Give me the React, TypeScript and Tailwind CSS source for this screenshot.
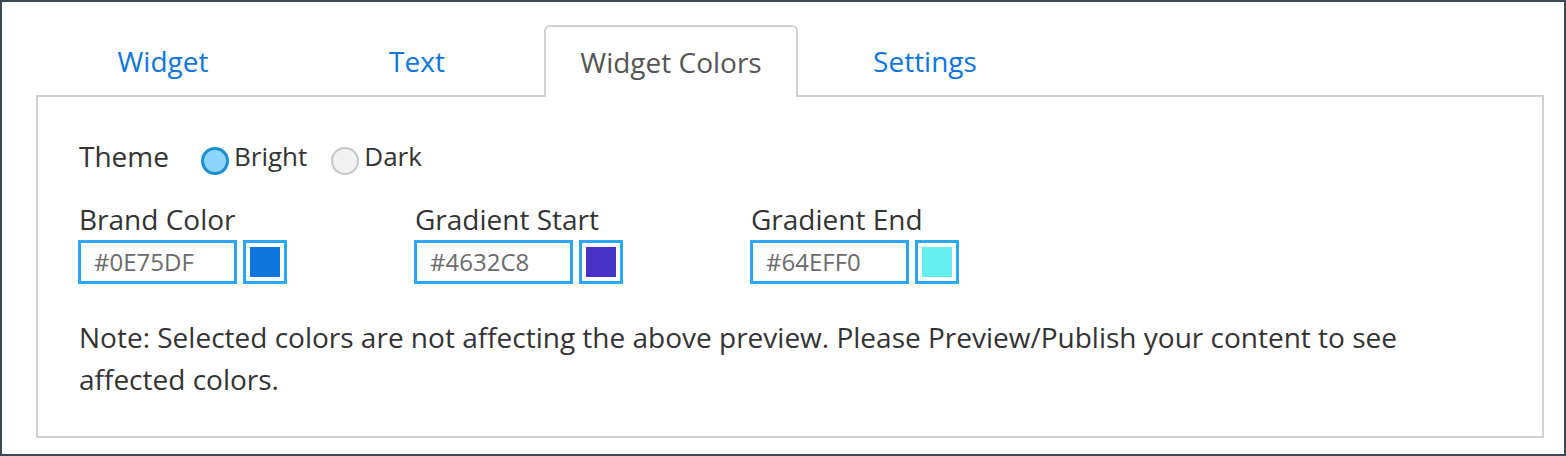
import React, { useState } from 'react';

const tabs = ['Widget', 'Text', 'Widget Colors', 'Settings'];

const colorFields = [
  { label: 'Brand Color', value: '#0E75DF', swatch: 'bg-[#0e75df]' },
  { label: 'Gradient Start', value: '#4632C8', swatch: 'bg-[#4632c8]' },
  { label: 'Gradient End', value: '#64EFF0', swatch: 'bg-[#64eff0]' },
];

const App: React.FC = () => {
  const [active, setActive] = useState('Widget Colors');
  const [theme, setTheme] = useState<'bright' | 'dark'>('bright');

  return (
    <div
      className="w-[1566px] h-[456px] bg-white border-2 border-[#3b4954] pl-[34px] pr-[20px] pt-[23px] text-[28px] leading-[42px] text-[#333333]"
      style={{ fontFamily: "'Open Sans', 'Noto Sans', sans-serif" }}
    >
      {/* Tabs */}
      <div className="flex h-[72px] -mb-[2px] relative z-10">
        {tabs.map((tab) => {
          const isActive = tab === active;
          return (
            <button
              key={tab}
              onClick={() => setActive(tab)}
              className={`w-[254px] h-[72px] pt-0 text-center ${isActive
                ? 'bg-white border-2 border-b-0 border-[#d0d0d0] rounded-t-[6px] text-[#555555]'
                : 'text-[#0e75df] border-2 border-transparent'
                }`}
            >
              <span className="block leading-[38px]">{tab}</span>
            </button>
          );
        })}
      </div>

      {/* Panel */}
      <div className="h-[343px] border-2 border-[#d0d0d0] px-[41px] pt-[38px]">
        {/* Theme */}
        <div className="flex items-start h-[42px]">
          <span>Theme</span>
          <label className="flex items-start ml-[32px] cursor-pointer text-[26px]" onClick={() => setTheme('bright')}>
            <span
              className={`mt-[12px] w-[28px] h-[28px] rounded-full ${theme === 'bright'
                ? 'border-[3px] border-[#1a8fd1] bg-[#8ed5fd]'
                : 'border-2 border-[#c6c6c6] bg-[#f1f1f1]'
                }`}
            />
            <span className="ml-[5px]">Bright</span>
          </label>
          <label className="flex items-start ml-[24px] cursor-pointer text-[26px]" onClick={() => setTheme('dark')}>
            <span
              className={`mt-[12px] w-[28px] h-[28px] rounded-full ${theme === 'dark'
                ? 'border-[3px] border-[#1a8fd1] bg-[#8ed5fd]'
                : 'border-2 border-[#c6c6c6] bg-[#f1f1f1]'
                }`}
            />
            <span className="ml-[5px]">Dark</span>
          </label>
        </div>

        {/* Color fields */}
        <div className="flex mt-[21px] -ml-px">
          {colorFields.map((field) => (
            <div key={field.label} className="w-[336px]">
              <div className="pl-px">{field.label}</div>
              <div className="flex gap-[6px]">
                <div className="w-[159px] h-[44px] border-[3px] border-[#2ba7f7] pl-[13px] flex items-center text-[24px] leading-none text-[#6b6b6b]">
                  {field.value}
                </div>
                <div className="w-[44px] h-[44px] border-[3px] border-[#2ba7f7] p-[4px]">
                  <div className={`w-full h-full ${field.swatch}`} />
                </div>
              </div>
            </div>
          ))}
        </div>

        {/* Note */}
        <p className="mt-[32px]">
          Note: Selected colors are not affecting the above preview. Please Preview/Publish your content to see affected colors.
        </p>
      </div>
    </div>
  );
};

export default App;
